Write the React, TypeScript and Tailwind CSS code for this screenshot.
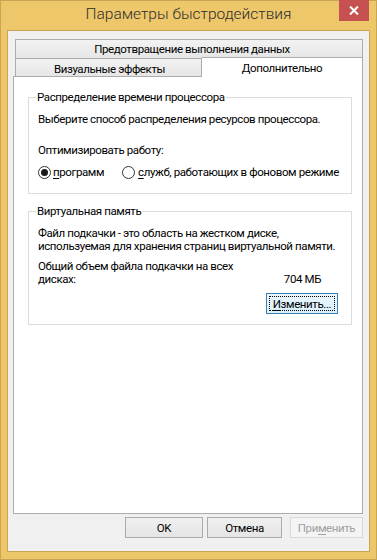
import React from 'react';

const font = { fontFamily: 'Roboto, "Liberation Sans", sans-serif' };

function Radio({ checked }: { checked?: boolean }) {
  return (
    <span className="w-[13px] h-[13px] rounded-full border border-[#333] bg-white flex items-center justify-center shrink-0">
      {checked && <span className="w-[7px] h-[7px] rounded-full bg-[#1a1a1a]" />}
    </span>
  );
}

function Group({ title, className, children }: { title: string; className?: string; children: React.ReactNode }) {
  return (
    <fieldset className={`min-w-0 border border-[#dcdcdc] mx-0 px-[9px] ${className ?? ''}`}>
      <legend className="px-[1px] ml-[-2px] leading-[14px]">{title}</legend>
      {children}
    </fieldset>
  );
}

export default function App() {
  return (
    <div
      className="w-[377px] h-[560px] flex flex-col bg-[#efc76b] border border-[#c9a556] text-[11.5px] tracking-[-0.4px] text-black whitespace-nowrap"
      style={font}
    >
      {/* заголовок */}
      <div className="relative h-[29px] flex items-center justify-center">
        <span className="text-[15.5px] tracking-normal font-light text-[#2e2e2e] -mt-[1px]">Параметры быстродействия</span>
        <div className="absolute top-[-1px] right-[7px] w-[30px] h-[21px] bg-[#c75050] flex items-center justify-center">
          <svg width="10" height="9" viewBox="0 0 10 9">
            <path d="M1 0.5 L9 8.5 M9 0.5 L1 8.5" stroke="white" strokeWidth="2" />
          </svg>
        </div>
      </div>

      {/* клиентская область */}
      <div className="flex-1 mx-[6px] mb-[7px] border border-[#c9a556] bg-[#f0f0f0] flex flex-col px-[5px] pt-[8px]">
        {/* вкладки */}
        <div className="ml-[2px] mr-[1px] flex flex-col">
          <div className="h-[19px] border border-[#acacac] border-b-0 bg-gradient-to-b from-[#f2f2f2] to-[#e6e6e6] flex items-center justify-center pl-[6px] leading-[14px]">
            Предотвращение выполнения данных
          </div>
          <div className="flex h-[18px] relative z-10">
            <div className="w-[187px] border border-[#acacac] border-b-0 bg-gradient-to-b from-[#f2f2f2] to-[#e6e6e6] flex items-center justify-center pl-[2px] pt-[2px] leading-[14px]">
              Визуальные эффекты
            </div>
            <div className="flex-1 h-[20px] -mt-[1px] border border-[#acacac] border-b-0 border-l-0 bg-white flex items-center justify-center leading-[14px]">
              Дополнительно
            </div>
          </div>
        </div>

        {/* панель */}
        <div className="h-[438px] mr-[1px] border border-[#acacac] bg-white pl-[14px] pr-[10px] pt-[13px]">
          <Group title="Распределение времени процессора" className="h-[104px]">
            <div className="mt-[8px] leading-[14px]">Выберите способ распределения ресурсов процессора.</div>
            <div className="mt-[17px] leading-[14px]">Оптимизировать работу:</div>
            <div className="mt-[8px] flex items-center leading-[14px]">
              <Radio checked />
              <span className="ml-[2px]">
                <span className="underline underline-offset-2">п</span>рограмм
              </span>
              <span className="ml-[18px]">
                <Radio />
              </span>
              <span className="ml-[3px]">
                <span className="underline underline-offset-2">с</span>лужб, работающих в фоновом режиме
              </span>
            </div>
          </Group>

          <Group title="Виртуальная память" className="h-[121px] mt-[10px]">
            <div className="mt-[9px] leading-[12.5px]">
              Файл подкачки - это область на жестком диске,
              <br />
              используемая для хранения страниц виртуальной памяти.
            </div>
            <div className="mt-[8px] leading-[12.5px]">Общий объем файла подкачки на всех</div>
            <div className="flex justify-between pr-[21px] leading-[12.5px]">
              <span>дисках:</span>
              <span>704 МБ</span>
            </div>
            <div className="flex justify-end pr-[4px] mt-[8px]">
              <div className="w-[72px] h-[21px] border border-[#3c7fb1] bg-gradient-to-b from-[#eaf6fd] to-[#d9f0fc] p-[2px]">
                <div className="h-full border border-dotted border-black flex items-center justify-center leading-[14px]">
                  <span>
                    <span className="underline underline-offset-2">И</span>зменить...
                  </span>
                </div>
              </div>
            </div>
          </Group>
        </div>

        {/* кнопки */}
        <div className="flex justify-end gap-[4px] mt-[3px] mr-[1px]">
          <button className="w-[78px] h-[21px] border border-[#acacac] bg-gradient-to-b from-[#f0f0f0] to-[#e5e5e5] leading-[14px]">
            OK
          </button>
          <button className="w-[75px] h-[21px] border border-[#acacac] bg-gradient-to-b from-[#f0f0f0] to-[#e5e5e5] leading-[14px] mr-[4px]">
            Отмена
          </button>
          <button className="w-[73px] h-[21px] border border-[#d9d9d9] bg-[#f4f4f4] text-[#a0a0a0] leading-[14px]">
            При<span className="underline underline-offset-2">м</span>енить
          </button>
        </div>
      </div>
    </div>
  );
}
